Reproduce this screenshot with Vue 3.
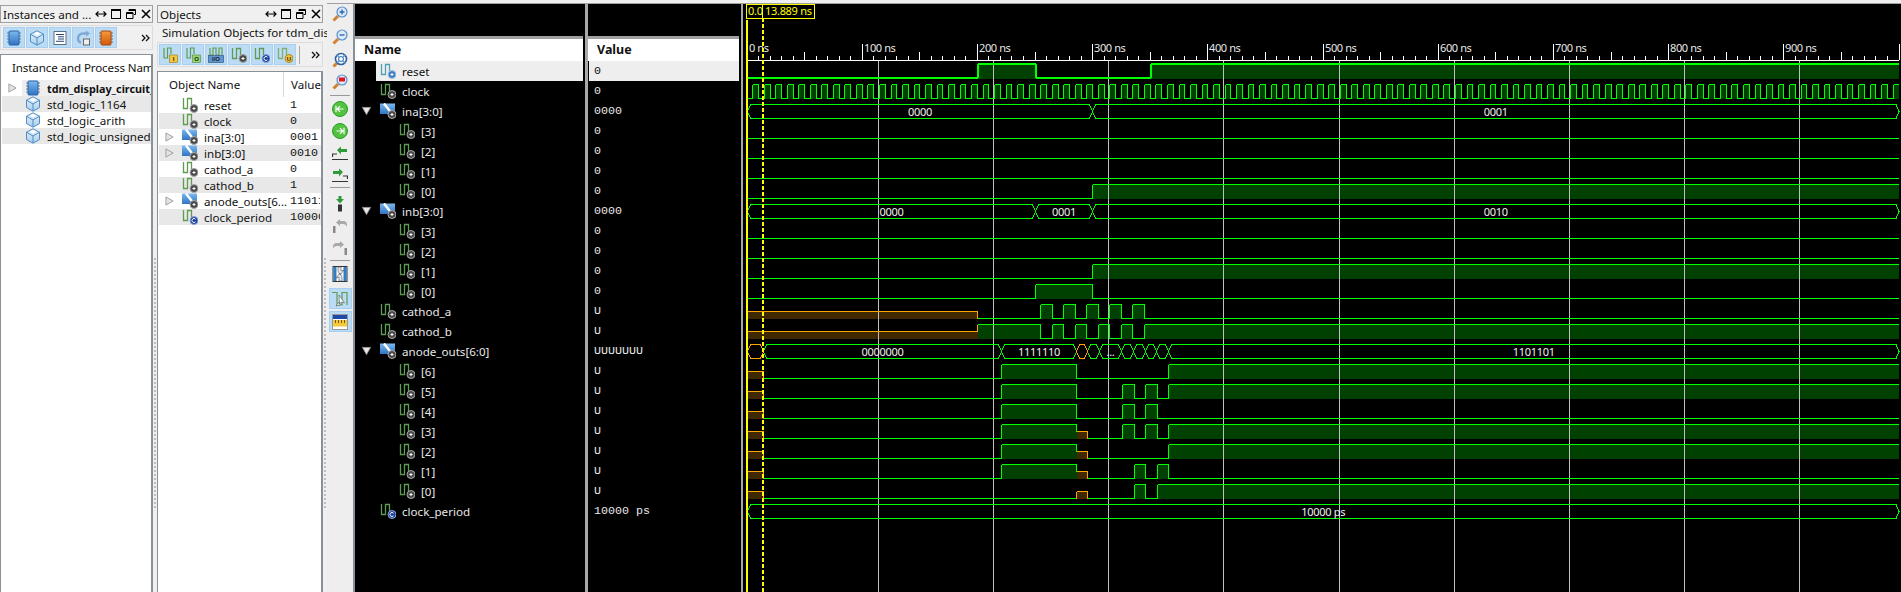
<template>
  <div class="app">
    <svg class="defs" width="0" height="0">
      <defs>
        <linearGradient id="blueGrad" x1="0" y1="0" x2="0" y2="1"><stop offset="0" stop-color="#7db8ee" /><stop offset="1" stop-color="#2f74c4" /></linearGradient>
        <linearGradient id="cubeGrad" x1="0" y1="0" x2="0" y2="1"><stop offset="0" stop-color="#eaf3fb" /><stop offset="1" stop-color="#a9cdec" /></linearGradient>
        <linearGradient id="orangeGrad" x1="0" y1="0" x2="0" y2="1"><stop offset="0" stop-color="#f59a3c" /><stop offset="1" stop-color="#d2590c" /></linearGradient>
        <symbol id="dot" viewBox="0 0 16 16"><circle cx="12" cy="11.5" r="4" fill="#4a4a4a" stroke="#a8a8a8" /><path d="M10.5 11.5h3M12 10v3" stroke="#fff" /></symbol>
        <symbol id="sig" viewBox="0 0 16 16"><path d="M1.5 1v10.5h4V1.5h4V8" fill="none" stroke="#5d9c52" stroke-width="1.3" /><use href="#dot" /></symbol>
        <symbol id="sig-sel" viewBox="0 0 16 16"><path d="M1.5 1v10.5h4V1.5h4V8" fill="none" stroke="#4f9fb8" stroke-width="1.3" /><circle cx="12" cy="11.5" r="4" fill="#3d7fc2" stroke="#a8c8e4" /><path d="M10.5 11.5h3M12 10v3" stroke="#fff" /></symbol>
        <symbol id="sig-const" viewBox="0 0 16 16"><path d="M1.5 1v10.5h4V1.5h4V8" fill="none" stroke="#5d9c52" stroke-width="1.3" /><circle cx="12" cy="11.5" r="4" fill="#1b3f9c" stroke="#8fa6d8" /><path d="M13.5 10.2a2 2 0 1 0 0 2.6" fill="none" stroke="#fff" /></symbol>
        <symbol id="bus" viewBox="0 0 16 16"><rect x="0" y="0.5" width="15" height="10.5" fill="url(#blueGrad)" /><path d="M4 0.5l7 9" stroke="#fff" stroke-width="2.4" /><use href="#dot" /></symbol>
        <symbol id="chip" viewBox="0 0 16 16"><path d="M1 3h14M1 6h14M1 9h14M1 12h14" stroke="#6b7f94" /><rect x="3" y="1" width="10" height="14" rx="1" fill="url(#blueGrad)" stroke="#2a62a8" /></symbol>
        <symbol id="chip-o" viewBox="0 0 16 16"><path d="M1 3h14M1 6h14M1 9h14M1 12h14" stroke="#7b6a58" /><rect x="3" y="1" width="10" height="14" rx="1" fill="url(#orangeGrad)" stroke="#a8480c" /></symbol>
        <symbol id="cube" viewBox="0 0 16 16"><path d="M8 .8l6.5 3.4v7.4L8 15.2l-6.5-3.6V4.2z" fill="url(#cubeGrad)" stroke="#4d8fc6" /><path d="M1.5 4.2L8 8l6.5-3.8M8 8v7" fill="none" stroke="#4d8fc6" /><path d="M5 3.6L8 2l3 1.6L8 5.4z" fill="#fff" /></symbol>
        <symbol id="doc" viewBox="0 0 16 16"><rect x="2" y="1.5" width="12" height="13" fill="#fff" stroke="#5a6f86" /><path d="M4 4.5h8M6 6.8h6M6 9h6M4 11.3h8" stroke="#28486e" /></symbol>
        <symbol id="refresh" viewBox="0 0 16 16"><path d="M13 3.5H8a5 5 0 0 0-5 5c0 2 1 3.5 3 4" fill="none" stroke="#7fa8d4" stroke-width="2.4" /><path d="M11 0.5l4 3-4 3z" fill="#7fa8d4" /><rect x="8.5" y="9" width="6" height="6" fill="#eee" stroke="#666" /></symbol>
        <symbol id="mag" viewBox="0 0 16 16"><path d="M6 10L1.5 14.5" stroke="#cf8230" stroke-width="3" /><circle cx="10" cy="6" r="5" fill="#dcebfb" stroke="#5a8fc8" stroke-width="1.2" /></symbol>
        <symbol id="zoom-in" viewBox="0 0 16 16"><use href="#mag" /><path d="M7.5 6h5M10 3.5v5" stroke="#2f66b0" stroke-width="1.4" /></symbol>
        <symbol id="zoom-out" viewBox="0 0 16 16"><use href="#mag" /><path d="M7.5 6h5" stroke="#2f66b0" stroke-width="1.4" /></symbol>
        <symbol id="zoom-fit" viewBox="0 0 16 16"><path d="M5 11L1.5 14.5" stroke="#cf8230" stroke-width="3" /><circle cx="9" cy="7" r="5.5" fill="#fff" stroke="#2f5f9e" stroke-width="1.6" /><circle cx="9" cy="7" r="2.4" fill="#fff" stroke="#2f5f9e" /><path d="M5 3l2.4 2.4M13 3l-2.4 2.4M5 11l2.4-2.4M13 11l-2.4-2.4" stroke="#5aa0dc" stroke-width="1.6" /></symbol>
        <symbol id="zoom-red" viewBox="0 0 16 16"><use href="#mag" /><rect x="7" y="3.5" width="6" height="4" fill="#e8101c" /></symbol>
        <symbol id="go-first" viewBox="0 0 16 16"><circle cx="8" cy="8" r="7.5" fill="#53c23f" stroke="#2d9a2d" /><path d="M11.5 8h-6M8 5.2L5.2 8 8 10.8M4 4.8v6.4" fill="none" stroke="#fff" stroke-width="1.2" /></symbol>
        <symbol id="go-last" viewBox="0 0 16 16"><circle cx="8" cy="8" r="7.5" fill="#53c23f" stroke="#2d9a2d" /><path d="M4.5 8h6M8 5.2L10.8 8 8 10.8M12 4.8v6.4" fill="none" stroke="#fff" stroke-width="1.2" /></symbol>
        <symbol id="edge-back" viewBox="0 0 16 16"><path d="M0.5 12V9H5M0 14.5h16" fill="none" stroke="#333" stroke-width="1.2" /><path d="M5 5L9 1.5V4h6v3H9v2.5z" fill="#2e9a3a" /></symbol>
        <symbol id="edge-next" viewBox="0 0 16 16"><path d="M15.5 12V9H11M0 14.5h16" fill="none" stroke="#333" stroke-width="1.2" /><path d="M11 5L7 1.5V4H1v3h6v2.5z" fill="#2e9a3a" /></symbol>
        <symbol id="marker" viewBox="0 0 16 16"><path d="M6.5 0h3v3H12L8 7.5 4 3h2.5z" fill="#2e9a3a" /><rect x="6" y="8.5" width="4" height="7" fill="#333" /></symbol>
        <symbol id="undo" viewBox="0 0 16 16"><rect x="1" y="8" width="2.5" height="7" fill="#888" /><path d="M4 4.5L8 1v2h3a4 4 0 0 1 4 4v1.5a4 4 0 0 0-4-2.5H8v2z" fill="#a8a8a8" /></symbol>
        <symbol id="redo" viewBox="0 0 16 16"><rect x="12.5" y="8" width="2.5" height="7" fill="#888" /><path d="M12 4.5L8 1v2H5a4 4 0 0 0-4 4v1.5a4 4 0 0 1 4-2.5h3v2z" fill="#a8a8a8" /></symbol>
        <symbol id="swap" viewBox="0 0 16 16"><rect x="1" y="0.5" width="14" height="15" fill="#fff" stroke="#333" /><rect x="1.5" y="1" width="3" height="14" fill="#2f7fc8" /><rect x="11.5" y="1" width="3" height="14" fill="#2f7fc8" /><path d="M6 1h3v4l3-1-4 5-2-4zM10 15H7v-4l-3 1 4-5 2 4z" fill="#e8e8e8" stroke="#555" stroke-width=".6" /></symbol>
        <symbol id="cursor-wave" viewBox="0 0 16 16"><path d="M0 1.5h5V14h5V1.5h5V14" fill="none" stroke="#5d9c52" stroke-width="1.2" /><path d="M7 4l.5 9 2-2 3 1-5.5-8zM4 15l3-4 1 3z" fill="#fff" stroke="#555" stroke-width=".6" /></symbol>
        <symbol id="ruler" viewBox="0 0 16 16"><rect x="0.5" y="0.5" width="15" height="15" fill="#fff" stroke="#999" /><rect x="1" y="1" width="14" height="4" fill="#1f4aa8" /><rect x="1" y="6" width="14" height="6.5" fill="#f6c83c" /><path d="M3.5 6v3M6.5 6v3M9.5 6v3M12.5 6v3" stroke="#6b5a10" /></symbol>
        <symbol id="tag-i" viewBox="0 0 16 16"><path d="M2 1v10h3.5V1H9v6" fill="none" stroke="#5d9c52" stroke-width="1.2" /><rect x="7.5" y="8" width="8" height="7.5" fill="#f6c83c" stroke="#8a7420" stroke-width=".6" /><text x="11.5" y="14.3" class="tag-text" text-anchor="middle">I</text></symbol>
        <symbol id="tag-o" viewBox="0 0 16 16"><path d="M2 1v10h3.5V1H9v6" fill="none" stroke="#5d9c52" stroke-width="1.2" /><rect x="7.5" y="8" width="8" height="7.5" fill="#97d46f" stroke="#4d8a30" stroke-width=".6" /><text x="11.5" y="14.3" class="tag-text" text-anchor="middle">O</text></symbol>
        <symbol id="tag-io" viewBox="0 0 16 16"><path d="M2 1v7h3V1h3v7h3V1h3v7" fill="none" stroke="#5d9c52" stroke-width="1.2" /><rect x="0.5" y="8.5" width="15" height="7" fill="#5f95d2" stroke="#28486e" stroke-width=".6" /><text x="8" y="14.3" class="tag-text" text-anchor="middle">I/O</text></symbol>
        <symbol id="tag-u" viewBox="0 0 16 16"><path d="M1.5 1v10.5h4V1.5h4V8" fill="none" stroke="#7fb070" stroke-width="1.3" /><circle cx="12" cy="11.5" r="4" fill="#f4c43c" stroke="#a88a20" /><text x="12" y="14" class="tag-text" text-anchor="middle">U</text></symbol>
        <symbol id="arrow-right" viewBox="0 0 10 10"><path d="M1 .5L9 5 1 9.5z" fill="#e4e4e4" stroke="#999" /></symbol>
        <symbol id="arrow-down" viewBox="0 0 10 10"><path d="M.5 1h9L5 9z" fill="#e8e8e8" stroke="#999" /></symbol>
        <symbol id="more" viewBox="0 0 10 8"><path d="M1 1l3 3-3 3M5 1l3 3-3 3" fill="none" stroke="#111" stroke-width="1.3" /></symbol>
        <symbol id="ctl-resize" viewBox="0 0 12 12"><path d="M1 6h10M3.5 3.5L1 6l2.5 2.5M8.5 3.5L11 6 8.500 8.500" fill="none" stroke="#000" stroke-width="1.2" /></symbol>
        <symbol id="ctl-max" viewBox="0 0 12 12"><rect x="1.5" y="1.5" width="9" height="9" fill="none" stroke="#000" /><path d="M1.5 2.5h9" stroke="#000" /></symbol>
        <symbol id="ctl-float" viewBox="0 0 12 12"><path d="M4 3V1.5h6.500v5H9M1.5 4.500H8v6H1.5zM1.5 5.5H8M4 2.500h6.500" fill="none" stroke="#000" /></symbol>
        <symbol id="ctl-close" viewBox="0 0 12 12"><path d="M2 2l8 8M10 2l-8 8" stroke="#000" stroke-width="1.6" /></symbol>
      </defs>
    </svg>

    <section class="pane pane-inst">
      <header class="title">
        <span class="title-text">Instances and ...</span>
        <svg v-for="c in controls" :key="c" class="ctl"><use :href="'#' + c" /></svg>
      </header>
      <div class="tools tools-inst">
        <button v-for="t in instTools" :key="t" class="tool"><svg class="ico"><use :href="'#' + t" /></svg></button>
        <svg class="more"><use href="#more" /></svg>
      </div>
      <div class="list list-inst">
        <div class="list-head">Instance and Process Nam</div>
        <div v-for="(r, i) in instances" :key="r.name" class="inst-row" :class="{ odd: i % 2 == 1 }">
          <svg v-if="r.top" class="twist"><use href="#arrow-right" /></svg>
          <div class="inst-cell" :class="{ current: r.top }">
            <svg class="ico"><use :href="'#' + r.icon" /></svg>
            <span class="inst-name" :class="{ bold: r.top }">{{ r.name }}</span>
          </div>
        </div>
      </div>
    </section>

    <div class="grip"></div>

    <section class="pane pane-obj">
      <header class="title">
        <span class="title-text">Objects</span>
        <svg v-for="c in controls" :key="c" class="ctl"><use :href="'#' + c" /></svg>
      </header>
      <div class="subtitle">Simulation Objects for tdm_dis...</div>
      <div class="tools tools-obj">
        <button v-for="t in objTools" :key="t" class="tool"><svg class="ico"><use :href="'#' + t" /></svg></button>
        <span class="tool-sep"></span>
        <svg class="more"><use href="#more" /></svg>
      </div>
      <div class="list list-obj">
        <div class="obj-head"><span class="obj-name-h">Object Name</span><span class="obj-value-h">Value</span></div>
        <div v-for="(r, i) in objects" :key="r.name" class="obj-row" :class="{ odd: i % 2 == 1 }">
          <svg v-if="r.icon == 'bus'" class="twist"><use href="#arrow-right" /></svg>
          <svg class="ico"><use :href="'#' + r.icon" /></svg>
          <span class="obj-name">{{ r.name }}</span>
          <span class="obj-value">{{ r.value }}</span>
        </div>
      </div>
    </section>

    <div class="grip"></div>

    <aside class="side">
      <div v-for="(g, gi) in sideTools" :key="gi" class="side-group" :class="'g' + gi">
        <div v-for="t in g" :key="t" class="side-item" :class="{ active: t == 'cursor-wave' || t == 'ruler' }">
          <svg class="ico"><use :href="'#' + t" /></svg>
        </div>
      </div>
    </aside>

    <main class="viewer">
      <div class="col col-name">
        <div class="col-top"></div>
        <div class="col-head">Name</div>
        <div v-for="r in rows" :key="r.id" class="row" :class="{ selected: r.selected }">
          <svg v-if="r.open" class="twist twist-open"><use href="#arrow-down" /></svg>
          <div class="row-cell" :class="'depth' + r.depth">
            <svg class="ico"><use :href="'#' + r.icon" /></svg>
            <span class="row-name">{{ r.name }}</span>
          </div>
        </div>
      </div>
      <div class="split"></div>
      <div class="col col-value">
        <div class="col-top"></div>
        <div class="col-head">Value</div>
        <div v-for="r in rows" :key="r.id" class="row val" :class="{ selected: r.selected }">{{ r.value }}</div>
      </div>
      <div class="split split-thin"></div>
      <svg class="wave" viewBox="745 4 1156 588" width="1156" height="588">
        <template v-for="r in traces" :key="r.id">
          <rect v-for="(f, i) in r.fills" :key="i" :x="f.x" :y="f.y" :width="f.w" :height="f.h" :fill="f.color" />
        </template>
        <path :d="gridPath" stroke="#c0c0c0" />
        <path :d="rulerPath" stroke="#fff" />
        <text v-for="l in rulerLabels" :key="l.text" :x="l.x" y="52" class="ruler-text">{{ l.text }}</text>
        <template v-for="r in traces" :key="r.id">
          <path :d="r.green" fill="none" stroke="#00ff00" :stroke-width="r.width" />
          <path :d="r.orange" fill="none" stroke="#ffa500" />
          <text v-for="l in r.labels" :key="l.x" :x="l.x" :y="l.y" class="bus-text" text-anchor="middle">{{ l.text }}</text>
        </template>
        <rect x="746.5" y="4.5" width="16" height="14" fill="none" stroke="#ffff00" />
        <rect x="762.5" y="4.5" width="52" height="14" fill="none" stroke="#ffff00" />
        <text x="748" y="15" class="cursor-text">0.0</text>
        <text x="765" y="15" class="cursor-text">13.889 ns</text>
        <path d="M747 20V592" stroke="#ffff00" stroke-width="2" />
        <path d="M763 18V592" stroke="#ffff00" stroke-width="2" stroke-dasharray="4 2" />
      </svg>
    </main>
  </div>
</template>

<script setup>
const END = 1899
const ns = t => 747 + 1.152 * t
const snap = x => Math.floor(x) + 0.5

const controls = ['ctl-resize', 'ctl-max', 'ctl-float', 'ctl-close']
const instTools = ['chip', 'cube', 'doc', 'refresh', 'chip-o']
const objTools = ['tag-i', 'tag-o', 'tag-io', 'sig', 'sig-const', 'tag-u']
const sideTools = [
  ['zoom-in', 'zoom-out', 'zoom-fit', 'zoom-red'],
  ['go-first', 'go-last', 'edge-back', 'edge-next'],
  ['marker', 'undo', 'redo'],
  ['swap', 'cursor-wave', 'ruler']
]

const instances = [
  { name: 'tdm_display_circuit_', icon: 'chip', top: true },
  { name: 'std_logic_1164', icon: 'cube' },
  { name: 'std_logic_arith', icon: 'cube' },
  { name: 'std_logic_unsigned', icon: 'cube' }
]

const objects = [
  { name: 'reset', value: '1', icon: 'sig' },
  { name: 'clock', value: '0', icon: 'sig' },
  { name: 'ina[3:0]', value: '0001', icon: 'bus' },
  { name: 'inb[3:0]', value: '0010', icon: 'bus' },
  { name: 'cathod_a', value: '0', icon: 'sig' },
  { name: 'cathod_b', value: '1', icon: 'sig' },
  { name: 'anode_outs[6...', value: '11011', icon: 'bus' },
  { name: 'clock_period', value: '10000', icon: 'sig-const' }
]

// logic traces are lists of [x, level], bus traces lists of [x, label, unknown]
const clock = [[747, '0']]
for (let t = 5; t < 1000; t += 5) clock.push([ns(t), t % 10 ? '1' : '0'])

const anodeHead = [[747, 'U'], [763, '0'], [1001.3, '1']]
const a1 = 1122.3, a2 = 1134.3, a3 = 1145.7, a4 = 1157.5, a5 = 1168.3

const signals = [
  { name: 'reset', value: '0', icon: 'sig-sel', selected: true, logic: [[747, '0'], [ns(200), '1'], [ns(250), '0'], [ns(350), '1']] },
  { name: 'clock', value: '0', logic: clock },
  { name: 'ina[3:0]', value: '0000', icon: 'bus', open: true, bus: [[747, '0000'], [ns(300), '0001']] },
  { name: '[3]', value: '0', depth: 1, logic: [[747, '0']] },
  { name: '[2]', value: '0', depth: 1, logic: [[747, '0']] },
  { name: '[1]', value: '0', depth: 1, logic: [[747, '0']] },
  { name: '[0]', value: '0', depth: 1, logic: [[747, '0'], [ns(300), '1']] },
  { name: 'inb[3:0]', value: '0000', icon: 'bus', open: true, bus: [[747, '0000'], [ns(250), '0001'], [ns(300), '0010']] },
  { name: '[3]', value: '0', depth: 1, logic: [[747, '0']] },
  { name: '[2]', value: '0', depth: 1, logic: [[747, '0']] },
  { name: '[1]', value: '0', depth: 1, logic: [[747, '0'], [ns(300), '1']] },
  { name: '[0]', value: '0', depth: 1, logic: [[747, '0'], [ns(250), '1'], [ns(300), '0']] },
  { name: 'cathod_a', value: 'U', logic: [[747, 'U'], [977.4, '0'], [1040.3, '1'], [1052.7, '0'], [1063.3, '1'], [1075.7, '0'], [1086.3, '1'], [1098.7, '0'], [1109.3, '1'], [1121.7, '0'], [1132.3, '1'], [1144.7, '0']] },
  { name: 'cathod_b', value: 'U', logic: [[747, 'U'], [977.4, '1'], [1040.3, '0'], [1052.7, '1'], [1063.3, '0'], [1075.7, '1'], [1086.3, '0'], [1098.7, '1'], [1109.3, '0'], [1121.7, '1'], [1132.3, '0'], [1144.7, '1']] },
  { name: 'anode_outs[6:0]', value: 'UUUUUUU', icon: 'bus', open: true, bus: [[747, '', true], [763, '0000000'], [1001.7, '1111110'], [1076.7, '', true], [1087.3, ''], [1099, '...'], [1121.7, ''], [1133.3, ''], [1145, ''], [1156.7, ''], [1168.3, '1101101']] },
  { name: '[6]', value: 'U', depth: 1, logic: [...anodeHead, [1076.7, '0'], [a5, '1']] },
  { name: '[5]', value: 'U', depth: 1, logic: [...anodeHead, [1076.7, '0'], [a1, '1'], [a2, '0'], [a3, '1'], [a4, '0'], [a5, '1']] },
  { name: '[4]', value: 'U', depth: 1, logic: [...anodeHead, [1076.7, '0'], [a1, '1'], [a2, '0'], [a3, '1'], [a4, '0']] },
  { name: '[3]', value: 'U', depth: 1, logic: [...anodeHead, [1076.7, 'U'], [1087.3, '0'], [a1, '1'], [a2, '0'], [a3, '1'], [a4, '0'], [a5, '1']] },
  { name: '[2]', value: 'U', depth: 1, logic: [...anodeHead, [1076.7, 'U'], [1087.3, '0'], [a5, '1']] },
  { name: '[1]', value: 'U', depth: 1, logic: [...anodeHead, [1076.7, 'U'], [1087.3, '0'], [a2, '1'], [a3, '0'], [a4, '1'], [a5, '0']] },
  { name: '[0]', value: 'U', depth: 1, logic: [[747, 'U'], [763, '0'], [1076.7, 'U'], [1087.3, '0'], [a2, '1'], [a3, '0'], [a4, '1']] },
  { name: 'clock_period', value: '10000 ps', icon: 'sig-const', bus: [[747, '10000 ps']] }
]

const rows = signals.map((s, i) => ({ id: i, depth: 0, icon: 'sig', ...s }))

function logicTrace(s, i) {
  const base = s.selected ? 0 : 0.5
  const low = 78 + 20 * i
  const levelY = { 0: low + base, 1: low - 14 + base, U: low - 7 + base }
  const fills = []
  let green = ''
  let orange = ''
  s.logic.forEach(([x, level], k) => {
    const next = s.logic[k + 1]
    const a = snap(x)
    const b = next ? snap(next[0]) : END
    const y = levelY[level]
    if (level != '0') {
      fills.push({ x: a, y, w: b - a, h: low + 1 - y, color: level == 'U' ? '#402800' : '#004000' })
    }
    const flat = `M${a} ${y}H${b}`
    if (level == 'U') orange += flat
    else green += flat
    if (next && next[1] != level) {
      const riseToU = next[1] == 'U' && levelY[next[1]] < y
      const stepD = `M${b} ${y}V${levelY[next[1]]}`
      if (level == 'U' || riseToU) orange += stepD
      else green += stepD
    }
  })
  return { id: i, fills, green, orange, labels: [], width: s.selected ? 2 : 1 }
}

function busTrace(s, i) {
  const top = 64.5 + 20 * i
  const bot = top + 14
  const mid = top + 7
  let green = ''
  let orange = ''
  const labels = []
  s.bus.forEach(([x, text, unknown], k) => {
    const next = s.bus[k + 1]
    const a = snap(x)
    const b = next ? snap(next[0]) : END
    const d = `M${a} ${mid}L${a + 3} ${top}H${b - 3}L${b} ${mid}L${b - 3} ${bot}H${a + 3}Z`
    if (unknown) orange += d
    else green += d
    if (text) labels.push({ x: (a + b) / 2, y: mid + 4, text })
  })
  return { id: i, fills: [], green, orange, labels, width: 1 }
}

const traces = signals.map((s, i) => (s.bus ? busTrace(s, i) : logicTrace(s, i)))

let gridPath = ''
for (let k = 0; k < 9; k++) gridPath += `M${Math.floor(878.3 + 115.2 * k) + 0.5} 61V592`

let rulerPath = `M747 60.5H${END}`
const rulerLabels = []
for (let k = 0; k <= 100; k++) {
  const x = Math.floor(ns(k * 10)) + 0.5
  const top = k % 10 == 0 ? 44 : k % 5 == 0 ? 52 : 56
  rulerPath += `M${x} ${top}V60`
  if (k % 10 == 0 && k < 100) rulerLabels.push({ x: x + 1.5, text: `${k * 10} ns` })
}
</script>

<style>
body {
  background: #000;
  overflow: hidden;
}
</style>

<style scoped>
.app {
  display: flex;
  width: 1901px;
  height: 592px;
  padding-top: 4px;
  box-sizing: border-box;
  overflow: hidden;
  background: #f0f0f0;
  font-family: "Noto Sans", Tahoma, sans-serif;
  font-size: 11.6px;
  color: #111;
}
.defs {
  position: absolute;
}
.tag-text {
  font: bold 6px "Liberation Sans", sans-serif;
  fill: #222;
}
.ico {
  width: 16px;
  height: 16px;
  flex: none;
}
.pane {
  display: flex;
  flex-direction: column;
  flex: none;
}
.pane-inst {
  width: 153px;
}
.pane-obj {
  width: 166px;
}
.grip {
  width: 4px;
  height: 252px;
  margin-top: 254px;
  flex: none;
  background: repeating-linear-gradient(to bottom, #bdbdbd 0 2px, transparent 2px 4px) center / 2px 100% no-repeat;
}
.title {
  display: flex;
  align-items: center;
  height: 18px;
  box-sizing: border-box;
  margin-top: 1px;
  padding-left: 2px;
  border: 1px solid #a0a0a0;
  gap: 3px;
}
.title-text {
  flex: 1;
  white-space: nowrap;
}
.ctl {
  width: 12px;
  height: 12px;
  flex: none;
}
.tools {
  display: flex;
  align-items: center;
  gap: 1px;
  flex: none;
  position: relative;
  height: 25px;
  box-sizing: border-box;
  border: 1px solid #dcdcdc;
}
.tools-inst {
  margin: 2px 0 4px;
  padding-left: 2px;
}
.tools-obj {
  margin-bottom: 4px;
  padding-left: 1px;
}
.tool {
  width: 22px;
  height: 21px;
  padding: 0;
  border: 1px solid #a6cff2;
  background: #bcdcf6;
  display: flex;
  align-items: center;
  justify-content: center;
}
.more {
  width: 10px;
  height: 8px;
  position: absolute;
  right: 1px;
  top: 8px;
}
.tool-sep {
  width: 1px;
  height: 18px;
  margin-left: 2px;
  background: #a8a8a8;
}
.list {
  flex: 1;
  background: #fff;
  border: 1px solid #8a9098;
  border-width: 1px 2px 0 1px;
  overflow: hidden;
  white-space: nowrap;
}
.list-inst {
  padding-top: 4px;
}
.list-head {
  height: 21px;
  line-height: 18px;
  padding-left: 11px;
  letter-spacing: -0.12px;
}
.inst-row {
  position: relative;
  height: 16px;
  display: flex;
  align-items: center;
  margin: 0 0 0 1px;
}
.inst-row.odd {
  background: #e8e8e8;
}
.inst-cell {
  display: flex;
  align-items: center;
  flex: 1;
  min-width: 0;
  gap: 6px;
  height: 16px;
  margin-left: 23px;
}
.inst-cell.current {
  background: #eeeeee;
  margin-left: 20px;
  padding-left: 3px;
}
.inst-name {
  overflow: hidden;
}
.bold {
  font-weight: 700;
  font-size: 10.8px;
}
.twist {
  position: absolute;
  width: 9px;
  height: 10px;
  left: 6px;
  top: 3px;
}
.subtitle {
  height: 19px;
  line-height: 19px;
  padding-left: 5px;
  white-space: nowrap;
}
.obj-head {
  display: flex;
  height: 25px;
  line-height: 26px;
}
.obj-name-h {
  width: 129px;
  padding-left: 11px;
  box-sizing: border-box;
  border-right: 1px solid #dadada;
}
.obj-value-h {
  padding-left: 7px;
}
.obj-row {
  position: relative;
  display: flex;
  align-items: center;
  height: 16px;
  margin: 0 0 0 1px;
  padding-left: 23px;
}
.obj-row.odd {
  background: #e8e8e8;
}
.obj-name {
  width: 86px;
  margin-left: 6px;
  flex: none;
  overflow: hidden;
}
.obj-value {
  font: 11.67px "Liberation Mono", monospace;
  width: 30px;
  overflow: hidden;
  flex: none;
}
.side {
  width: 26px;
  flex: none;
  margin-top: -1px;
  background: #eeeeee;
  display: flex;
  flex-direction: column;
  border-top: 1px solid #a0a0a0;
  border-right: 2px solid #8a9098;
}
.side-group {
  display: flex;
  flex-direction: column;
  align-items: center;
  padding-bottom: 2px;
  margin-bottom: 2px;
  position: relative;
}
.side-group:not(:last-child)::after {
  content: "";
  position: absolute;
  left: 3px;
  right: 3px;
  bottom: 0;
  height: 1px;
  background: #999;
}
.side-item {
  display: flex;
  align-items: center;
  justify-content: center;
  width: 23px;
  height: 22px;
  box-sizing: border-box;
}
.g0 {
  margin-top: -1px;
}
.g0 .side-item {
  height: 22.67px;
}
.g2 {
  margin-top: 3px;
}
.g3 .side-item {
  height: 23.5px;
}
.side-item.active {
  background: #bcdcf6;
  border: 1px solid #a6cff2;
  height: 21px;
  margin-top: 2px;
}
.viewer {
  flex: 1;
  display: flex;
  margin-top: -1px;
  background: #000;
  min-width: 0;
  border-top: 1px solid #a0a0a0;
  color: #e8e8e8;
}
.col {
  display: flex;
  flex-direction: column;
  flex: none;
}
.col-name {
  width: 228px;
}
.col-value {
  width: 151px;
}
.split {
  width: 3px;
  margin-left: 2px;
  flex: none;
  background: #a8a8a8;
}
.split-thin {
  width: 2px;
  margin-right: 2px;
}
.col-top {
  height: 32px;
  border-bottom: 3px solid #a0a0a0;
}
.col-head {
  height: 22px;
  line-height: 22px;
  background: #fff;
  color: #111;
  font-weight: 700;
  font-size: 12.5px;
  padding-left: 9px;
}
.row {
  position: relative;
  height: 20px;
  display: flex;
  align-items: center;
  white-space: nowrap;
}
.row-cell {
  display: flex;
  align-items: center;
  gap: 6px;
  height: 20px;
  flex: 1;
  padding-left: 25px;
}
.row-cell.depth1 {
  padding-left: 44px;
}
.row.selected .row-cell {
  background: #eeeeee;
  color: #111;
  margin-left: 21px;
  padding-left: 4px;
}
.twist-open {
  left: 7px;
  top: 5px;
}
.val {
  font: 11.67px "Liberation Mono", monospace;
  padding-left: 6px;
}
.val.selected {
  background: #eeeeee;
  color: #111;
  margin-left: 1px;
  padding-left: 5px;
}
.wave {
  display: block;
  flex: none;
  shape-rendering: crispEdges;
}
.ruler-text {
  font: 11px "Noto Sans", Tahoma, sans-serif;
  letter-spacing: -0.4px;
  fill: #e8e8e8;
}
.bus-text {
  font: 11px "Noto Sans", Tahoma, sans-serif;
  letter-spacing: -0.3px;
  fill: #f0f0f0;
}
.cursor-text {
  font: 11px "Noto Sans", Tahoma, sans-serif;
  letter-spacing: -0.3px;
  fill: #ffff00;
}
</style>
